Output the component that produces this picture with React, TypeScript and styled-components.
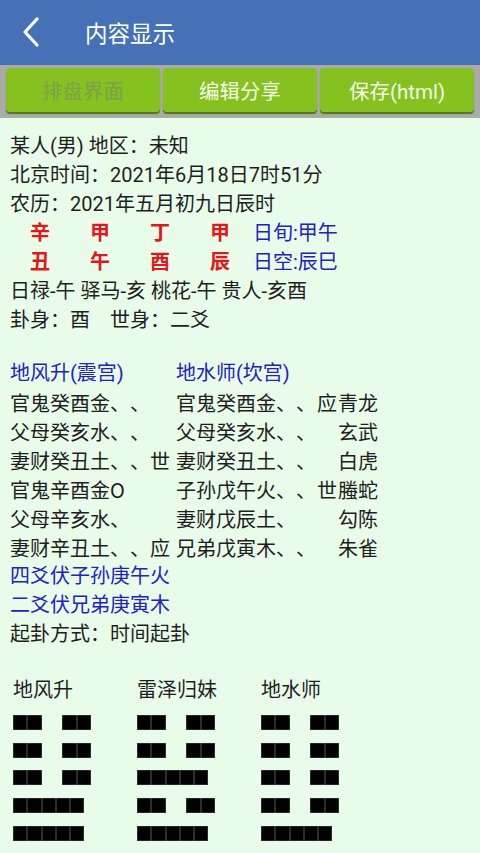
import React from "react";
import styled, { createGlobalStyle } from "styled-components";

const GlobalStyle = createGlobalStyle`
  html, body {
    margin: 0;
    padding: 0;
    background: #e9fce9;
  }
  body {
    font-family: Roboto, "Noto Sans CJK SC", sans-serif;
    color: #1e1e1e;
    text-spacing-trim: space-all;
    font-feature-settings: "chws" 0, "halt" 0, "palt" 0;
  }
`;

type Yao = 0 | 1;

const yaoRows = [
  { left: "官鬼癸酉金、、", leftMark: "", right: "官鬼癸酉金、、", rightMark: "应", god: "青龙" },
  { left: "父母癸亥水、、", leftMark: "", right: "父母癸亥水、、", rightMark: "", god: "玄武" },
  { left: "妻财癸丑土、、", leftMark: "世", right: "妻财癸丑土、、", rightMark: "", god: "白虎" },
  { left: "官鬼辛酉金O", leftMark: "", right: "子孙戊午火、、", rightMark: "世", god: "螣蛇" },
  { left: "父母辛亥水、", leftMark: "", right: "妻财戊辰土、", rightMark: "", god: "勾陈" },
  { left: "妻财辛丑土、、", leftMark: "应", right: "兄弟戊寅木、、", rightMark: "", god: "朱雀" },
];

// top to bottom, 1 = yang, 0 = yin
const hexagrams: { name: string; lines: Yao[] }[] = [
  { name: "地风升", lines: [0, 0, 0, 1, 1, 0] },
  { name: "雷泽归妹", lines: [0, 0, 1, 0, 1, 1] },
  { name: "地水师", lines: [0, 0, 0, 0, 1, 0] },
];

const BackIcon = () => (
  <svg width="20" height="30" viewBox="0 0 20 30">
    <path d="M16 2 L4 15 L16 28" fill="none" stroke="#fff" strokeWidth="3.2" strokeLinecap="round" strokeLinejoin="round" />
  </svg>
);

const HexLine: React.FC<{ yang: boolean }> = ({ yang }) =>
  yang ? (
    <LineRow>
      {[0, 1, 2, 3, 4].map((i) => <Cell key={i} />)}
    </LineRow>
  ) : (
    <LineRow>
      <Cell />
      <Cell />
      <Gap />
      <Cell />
      <Cell />
    </LineRow>
  );

const App: React.FC = () => {
  return (
    <Page>
      <GlobalStyle />
      <TopBar>
        <BackButton>
          <BackIcon />
        </BackButton>
        <Title>内容显示</Title>
      </TopBar>
      <ButtonBar>
        <ActionButton $disabled>排盘界面</ActionButton>
        <ActionButton>编辑分享</ActionButton>
        <ActionButton>保存(html)</ActionButton>
      </ButtonBar>

      <Content>
        <Line>某人(男) 地区：未知</Line>
        <Line>北京时间：2021年6月18日7时51分</Line>
        <Line>农历：2021年五月初九日辰时</Line>
        <GanZhiRow>
          {["辛", "甲", "丁", "甲"].map((c, i) => <Stem key={i}>{c}</Stem>)}
          <BlueText>日旬:甲午</BlueText>
        </GanZhiRow>
        <GanZhiRow>
          {["丑", "午", "酉", "辰"].map((c, i) => <Stem key={i}>{c}</Stem>)}
          <BlueText>日空:辰巳</BlueText>
        </GanZhiRow>
        <Line>日禄-午 驿马-亥 桃花-午 贵人-亥酉</Line>
        <Line>卦身：酉　世身：二爻</Line>

        <Spacer $h={24} />

        <YaoTable>
          <GuaName $span>地风升(震宫)</GuaName>
          <GuaName>地水师(坎宫)</GuaName>
          {yaoRows.map((r, i) => (
            <React.Fragment key={i}>
              <span>{r.left}</span>
              <span>{r.leftMark}</span>
              <span>{r.right}</span>
              <span>{r.rightMark}</span>
              <God>{r.god}</God>
            </React.Fragment>
          ))}
        </YaoTable>

        <Line $blue>四爻伏子孙庚午火</Line>
        <Line $blue>二爻伏兄弟庚寅木</Line>
        <Line>起卦方式：时间起卦</Line>

        <Spacer $h={27} />

        <HexRow>
          {hexagrams.map((h) => (
            <HexColumn key={h.name}>
              <HexName>{h.name}</HexName>
              {h.lines.map((y, i) => (
                <HexLine key={i} yang={y === 1} />
              ))}
            </HexColumn>
          ))}
        </HexRow>
      </Content>
    </Page>
  );
};

export default App;

// Styled Components
const Page = styled.div`
  width: 480px;
  min-height: 853px;
  background: #e9fce9;
`;

const TopBar = styled.header`
  height: 65px;
  background: #4571b6;
  display: flex;
  align-items: center;
`;

const BackButton = styled.div`
  width: 20px;
  height: 30px;
  margin-left: 21px;
  margin-top: -1px;
  display: flex;
`;

const Title = styled.div`
  margin-left: 44px;
  color: #fff;
  font-size: 22.5px;
  font-family: "Noto Sans CJK SC", sans-serif;
  margin-top: -2px;
`;

const ButtonBar = styled.div`
  height: 53px;
  background: #a9aaa9;
  display: flex;
  gap: 3px;
  padding: 3px 6px 0 6px;
  box-sizing: border-box;
`;

const ActionButton = styled.div<{ $disabled?: boolean }>`
  flex: 1;
  height: 44px;
  background: #86c21f;
  border-radius: 4px;
  box-shadow: 0 2px 1px #4d7a12;
  display: flex;
  align-items: center;
  justify-content: center;
  font-size: 20.5px;
  color: ${(p) => (p.$disabled ? "#7d9f4e" : "#f4fbe6")};
`;

const Content = styled.main`
  padding: 14px 0 0 10px;
  font-size: 20px;
  line-height: 29px;
`;

const Line = styled.div<{ $blue?: boolean }>`
  height: 29px;
  white-space: nowrap;
  color: ${(p) => (p.$blue ? "#2121c8" : "#1e1e1e")};
`;

const GanZhiRow = styled.div`
  display: flex;
  height: 29px;
  padding-left: 20px;
  gap: 40px;
`;

const Stem = styled.span`
  width: 20px;
  color: #e8141a;
  font-weight: bold;
`;

const BlueText = styled.span`
  color: #2121c8;
  margin-left: -17px;
`;

const Spacer = styled.div<{ $h: number }>`
  height: ${(p) => p.$h}px;
`;

const YaoTable = styled.div`
  display: grid;
  grid-template-columns: 140px 26px 141px 20px 41px;
  grid-auto-rows: 29px;
  white-space: nowrap;
  font-family: "Noto Sans CJK SC", sans-serif;
`;

const GuaName = styled.span<{ $span?: boolean }>`
  color: #2121c8;
  font-family: Roboto, "Noto Sans CJK SC", sans-serif;
  grid-column: ${(p) => (p.$span ? "1 / 3" : "3 / 6")};
`;

const God = styled.span`
  text-align: right;
`;

const HexRow = styled.div`
  display: flex;
  margin-left: 3px;
`;

const HexColumn = styled.div`
  width: 124px;
  display: flex;
  flex-direction: column;
  gap: 12.7px;
`;

const HexName = styled.div`
  height: 29px;
  margin-bottom: -2.7px;
`;

const LineRow = styled.div`
  display: flex;
  height: 15px;
`;

const Cell = styled.div`
  width: 14.3px;
  height: 15px;
  background: #000;
  box-shadow: inset 0 0 0 0.6px #4a4a4a;
`;

const Gap = styled.div`
  width: 20.7px;
`;
